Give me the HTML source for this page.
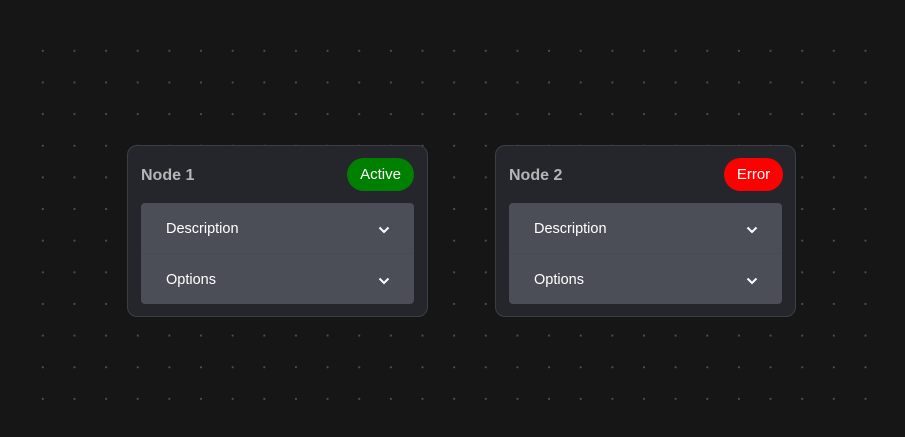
<!DOCTYPE html>
<html><head><style>
*{margin:0;padding:0;box-sizing:border-box}
body{width:905px;height:437px;overflow:hidden;background:#161616;font-family:"Liberation Sans",sans-serif;position:relative}
.dots{position:absolute;left:27.2px;top:35.2px;width:854.6px;height:379.8px;
background-image:radial-gradient(circle,#4e4e55 0.95px,transparent 1.25px);background-size:31.65px 31.65px}
.card{position:absolute;top:145px;width:301px;height:172px;background:#25262b;border:1px solid #3d3e44;border-radius:10px}
.title{position:absolute;left:13px;top:21px;font-weight:bold;font-size:16px;color:#b5b5b8}
.badge{position:absolute;top:12px;height:33px;border-radius:17px;color:#fff;font-size:15px;line-height:34px;text-align:center}
.acc{position:absolute;left:13px;top:57px;width:273px;height:101px;background:#4b4e57;border-radius:4px;overflow:hidden}
.item{height:50px;position:relative;color:#fff;font-size:14.5px}
.item+.item{border-top:1px solid #474a52;height:51px}
.item span{position:absolute;left:25px;top:18px}
.item svg{position:absolute;left:237px;top:23px}
</style></head><body>
<div class="dots"></div>
<div class="card" style="left:127px">
<div class="title">Node 1</div>
<div class="badge" style="left:219px;width:67px;background:#008000">Active</div>
<div class="acc">
<div class="item"><span>Description</span><svg width="12" height="8" viewBox="0 0 12 8"><path d="M1.5 1.5L6 6L10.5 1.5" stroke="#fff" stroke-width="2" fill="none"/></svg></div>
<div class="item"><span>Options</span><svg width="12" height="8" viewBox="0 0 12 8"><path d="M1.5 1.5L6 6L10.5 1.5" stroke="#fff" stroke-width="2" fill="none"/></svg></div>
</div></div>
<div class="card" style="left:495px">
<div class="title">Node 2</div>
<div class="badge" style="left:228px;width:59px;background:#ff0000">Error</div>
<div class="acc">
<div class="item"><span>Description</span><svg width="12" height="8" viewBox="0 0 12 8"><path d="M1.5 1.5L6 6L10.5 1.5" stroke="#fff" stroke-width="2" fill="none"/></svg></div>
<div class="item"><span>Options</span><svg width="12" height="8" viewBox="0 0 12 8"><path d="M1.5 1.5L6 6L10.5 1.5" stroke="#fff" stroke-width="2" fill="none"/></svg></div>
</div></div>
</body></html>
